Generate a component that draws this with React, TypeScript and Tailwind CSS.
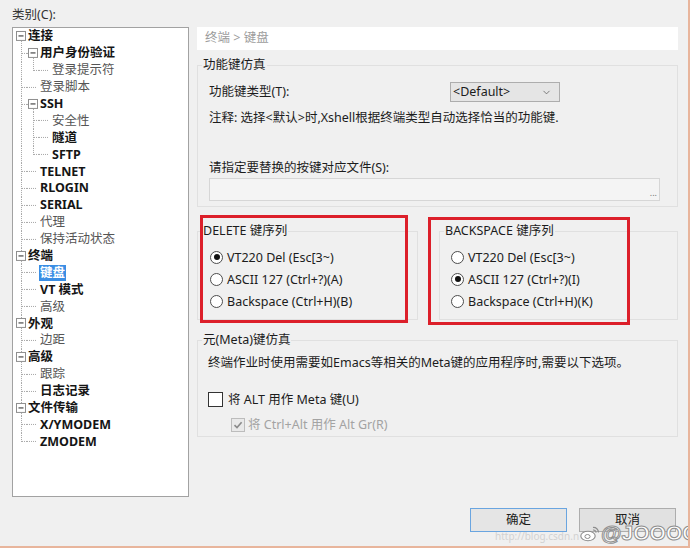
import { ChevronDown } from 'lucide-react';

type Node = {
  label: string;
  bold?: boolean;
  selected?: boolean;
  children?: Node[];
};

const TREE: Node[] = [
  {
    label: '连接',
    bold: true,
    children: [
      { label: '用户身份验证', bold: true, children: [{ label: '登录提示符' }] },
      { label: '登录脚本' },
      {
        label: 'SSH',
        bold: true,
        children: [{ label: '安全性' }, { label: '隧道', bold: true }, { label: 'SFTP', bold: true }],
      },
      { label: 'TELNET', bold: true },
      { label: 'RLOGIN', bold: true },
      { label: 'SERIAL', bold: true },
      { label: '代理' },
      { label: '保持活动状态' },
    ],
  },
  {
    label: '终端',
    bold: true,
    children: [
      { label: '键盘', bold: true, selected: true },
      { label: 'VT 模式', bold: true },
      { label: '高级' },
    ],
  },
  { label: '外观', bold: true, children: [{ label: '边距' }] },
  { label: '高级', bold: true, children: [{ label: '跟踪' }, { label: '日志记录', bold: true }] },
  {
    label: '文件传输',
    bold: true,
    children: [
      { label: 'X/YMODEM', bold: true },
      { label: 'ZMODEM', bold: true },
    ],
  },
];

type Row = {
  label: string;
  level: number;
  bold: boolean;
  selected: boolean;
  hasKids: boolean;
  first: boolean;
  // last-among-siblings flags for each ancestor and the row itself
  lastFlags: boolean[];
};

function flatten(nodes: Node[], level: number, lastFlags: boolean[], out: Row[]) {
  nodes.forEach((n, i) => {
    const flags = [...lastFlags, i === nodes.length - 1];
    out.push({
      label: n.label,
      level,
      bold: !!n.bold,
      selected: !!n.selected,
      hasKids: !!n.children?.length,
      first: level === 0 && i === 0,
      lastFlags: flags,
    });
    if (n.children) flatten(n.children, level + 1, flags, out);
  });
}

const ROWS: Row[] = [];
flatten(TREE, 0, [], ROWS);

type CellKind = 'blank' | 'pipe' | 'tee' | 'elbow' | 'leaf' | 'box';

// ── Tree connector cell ────────────────────────────────────────────────────

function Cell({
  kind,
  up,
  left,
}: {
  kind: CellKind;
  up?: boolean;
  left?: boolean;
}) {
  const dot = {
    stroke: '#a6a6a6',
    strokeWidth: 1,
    strokeDasharray: '1 1',
    shapeRendering: 'crispEdges' as const,
  };
  return (
    <svg
      viewBox="0 0 12 17"
      preserveAspectRatio="none"
      className="block h-full w-[12px] shrink-0"
    >
      {(kind === 'pipe' || kind === 'tee') && <line x1={6.5} y1={0} x2={6.5} y2={17} {...dot} />}
      {kind === 'elbow' && <line x1={6.5} y1={0} x2={6.5} y2={9} {...dot} />}
      {(kind === 'tee' || kind === 'elbow') && <line x1={7} y1={8.5} x2={12} y2={8.5} {...dot} />}
      {kind === 'leaf' && <line x1={0} y1={8.5} x2={10} y2={8.5} {...dot} />}
      {kind === 'box' && (
        <>
          {left && <line x1={0} y1={8.5} x2={2} y2={8.5} {...dot} />}
          {up && <line x1={6.5} y1={0} x2={6.5} y2={4} {...dot} />}
          <line x1={6.5} y1={13} x2={6.5} y2={17} {...dot} />
          <rect x={1.5} y={3.5} width={9} height={9} fill="#fff" stroke="#8e8e8e" strokeWidth={1} />
          <line x1={3.5} y1={8} x2={8.5} y2={8} stroke="#222" strokeWidth={1} />
        </>
      )}
    </svg>
  );
}

function cellsFor(row: Row) {
  const L = row.level;
  const f = row.lastFlags;
  const cells: { kind: CellKind; up?: boolean; left?: boolean }[] = [];
  for (let k = 0; k < L; k++) {
    const open = k === 0 ? !f[0] || !f[1] : !f[k + 1];
    if (k < L - 1) cells.push({ kind: open ? 'pipe' : 'blank' });
    else cells.push({ kind: open ? 'tee' : 'elbow' });
  }
  if (row.hasKids) cells.push({ kind: 'box', up: L === 0 && !row.first, left: L > 0 });
  else cells.push({ kind: 'leaf' });
  return cells;
}

function CategoryTree() {
  return (
    <div className="h-[470px] border border-[#a2a2a2] bg-white pl-[2px]">
      {ROWS.map((row, i) => (
        <div key={i} className="flex h-[16.9px] items-stretch">
          {cellsFor(row).map((c, j) => (
            <Cell key={j} kind={c.kind} up={c.up} left={c.left} />
          ))}
          <div className="flex items-center">
            <span
              className={
                row.selected
                  ? 'bg-[#3a8ee4] px-[1px] font-bold leading-[16px] whitespace-nowrap text-white'
                  : row.bold
                    ? 'px-[1px] font-bold leading-[16px] whitespace-nowrap text-[#151515]'
                    : 'px-[1px] leading-[16px] whitespace-nowrap text-[#555]'
              }
            >
              {row.label}
            </span>
          </div>
        </div>
      ))}
    </div>
  );
}

// ── Controls ───────────────────────────────────────────────────────────────

function Radio({ checked, label }: { checked?: boolean; label: string }) {
  return (
    <div className="flex h-[22px] items-center">
      <span className="grid h-[13px] w-[13px] place-items-center rounded-full border border-[#4d4d4d] bg-white">
        {checked && <span className="h-[6px] w-[6px] rounded-full bg-[#111]" />}
      </span>
      <span className="ml-[4px] leading-[17px] whitespace-nowrap">{label}</span>
    </div>
  );
}

function Group({
  title,
  className,
  children,
}: {
  title: string;
  className?: string;
  children: React.ReactNode;
}) {
  return (
    <fieldset className={`border border-[#e0e0e0] ${className ?? ''}`}>
      <legend className="ml-[4px] px-[1px] leading-[18px] whitespace-nowrap">{title}</legend>
      {children}
    </fieldset>
  );
}

export default function App() {
  return (
    <div className="relative flex h-[548px] w-[690px] flex-col overflow-hidden border-r-2 border-b-2 border-[#e8b59c] bg-[#f0f0f0] font-['Noto_Sans','Noto_Sans_CJK_SC',sans-serif] text-[12.5px] text-[#1c1c1c]">
      <div className="flex h-[497px]">
        {/* ── Category column ─────────────────────────────────────────── */}
        <div className="ml-[12px] w-[177px]">
          <div className="h-[27px] pt-[6px] leading-[18px] text-[#333]">类别(C):</div>
          <CategoryTree />
        </div>

        {/* ── Settings page ───────────────────────────────────────────── */}
        <div className="ml-[8px] w-[481px] pt-[27px]">
          <div className="flex h-[23px] items-center bg-white pl-[8px] text-[#9c9c9c]">
            终端 &gt; 键盘
          </div>

          <Group title="功能键仿真" className="mt-[6px]">
            <div className="pr-[16px] pb-[5px] pl-[11px]">
              <div className="mt-[8px] flex h-[20px] items-center">
                <span className="w-[241px]">功能键类型(T):</span>
                <div className="flex h-[20px] w-[110px] items-center justify-between border border-[#adadad] bg-[#e5e5e5] pr-[7px] pl-[2px]">
                  <span className="leading-[16px]">&lt;Default&gt;</span>
                  <ChevronDown size={11} strokeWidth={1.6} className="text-[#555]" />
                </div>
              </div>
              <p className="mt-[7px] leading-[17px]">
                注释: 选择&lt;默认&gt;时,Xshell根据终端类型自动选择恰当的功能键.
              </p>
              <p className="mt-[33px] leading-[17px]">请指定要替换的按键对应文件(S):</p>
              <div className="mt-[2px] flex h-[23px] w-[451px] items-end justify-end border border-[#d6d6d6] bg-[#f4f4f4]">
                <span className="pr-[2px] pb-[3px] text-[9px] leading-[9px] text-[#777]">...</span>
              </div>
            </div>
          </Group>

          <div className="mt-[15px] flex gap-[21px]">
            <Group title="DELETE 键序列" className="w-[221px]">
              <div className="mt-[6px] pb-[7px] pl-[12px]">
                <Radio checked label="VT220 Del (Esc[3~)" />
                <Radio label="ASCII 127 (Ctrl+?)(A)" />
                <Radio label="Backspace (Ctrl+H)(B)" />
              </div>
            </Group>
            <Group title="BACKSPACE 键序列" className="w-[239px]">
              <div className="mt-[6px] pb-[7px] pl-[11px]">
                <Radio label="VT220 Del (Esc[3~)" />
                <Radio checked label="ASCII 127 (Ctrl+?)(I)" />
                <Radio label="Backspace (Ctrl+H)(K)" />
              </div>
            </Group>
          </div>

          <Group title="元(Meta)键仿真" className="mt-[11px]">
            <div className="pb-[3px] pl-[10px]">
              <p className="mt-[5px] leading-[17px]">
                终端作业时使用需要如Emacs等相关的Meta键的应用程序时,需要以下选项。
              </p>
              <div className="mt-[20px] flex h-[17px] items-center">
                <span className="h-[15px] w-[15px] border border-[#333] bg-white" />
                <span className="ml-[5px] leading-[17px]">将 ALT 用作 Meta 键(U)</span>
              </div>
              <div className="mt-[8px] ml-[23px] flex h-[17px] items-center">
                <span className="grid h-[14px] w-[14px] place-items-center border border-[#bcbcbc] bg-[#e9e9e9]">
                  <svg width="10" height="10" viewBox="0 0 10 10">
                    <path d="M1.5 5.2 L4 7.6 L8.6 2.2" fill="none" stroke="#8a8a8a" strokeWidth="1.6" />
                  </svg>
                </span>
                <span className="ml-[3px] leading-[17px] text-[#a3a3a3]">将 Ctrl+Alt 用作 Alt Gr(R)</span>
              </div>
            </div>
          </Group>
        </div>
      </div>

      {/* ── Dialog buttons ──────────────────────────────────────────────── */}
      <div className="mt-[11px] flex justify-end gap-[12px] pr-[12px]">
        <button
          type="button"
          className="h-[24px] w-[97px] border border-[#6aa5e0] bg-[#e5e5e5] leading-[20px]"
        >
          确定
        </button>
        <button
          type="button"
          className="h-[24px] w-[97px] border border-[#adadad] bg-[#e1e1e1] leading-[20px]"
        >
          取消
        </button>
      </div>

      {/* annotation boxes drawn over the screenshot */}
      <div className="pointer-events-none absolute top-[215px] left-[200px] h-[108px] w-[208px] border-[3px] border-[#dc1f2a]" />
      <div className="pointer-events-none absolute top-[217px] left-[428px] h-[108px] w-[202px] border-[3px] border-[#dc1f2a]" />

      {/* watermark */}
      <div className="pointer-events-none absolute top-[521px] left-[495px] flex items-end whitespace-nowrap">
        <span className="mb-[3px] text-[10px] leading-[12px] text-[#d2d2d2]">http://blog.csdn.n</span>
        <svg width="20" height="17" viewBox="0 0 20 17" className="mb-[3px] ml-[1px]">
          <ellipse cx="8" cy="11" rx="7.2" ry="4.8" fill="#fff" stroke="#8c8c8c" strokeWidth="1.1" />
          <ellipse cx="7.5" cy="11.5" rx="2.6" ry="2" fill="none" stroke="#8c8c8c" strokeWidth="1" />
          <path d="M13 2.5 A5 5 0 0 1 18.5 7.5" fill="none" stroke="#8c8c8c" strokeWidth="1.2" />
          <path d="M13 5 A2.6 2.6 0 0 1 16 7.8" fill="none" stroke="#8c8c8c" strokeWidth="1.1" />
        </svg>
        <span className="ml-[1px] font-['Liberation_Sans',sans-serif] text-[21px] leading-[24px] font-bold text-white [-webkit-text-stroke:1px_#8f8f8f]">
          @JOOOOE
        </span>
      </div>
    </div>
  );
}
